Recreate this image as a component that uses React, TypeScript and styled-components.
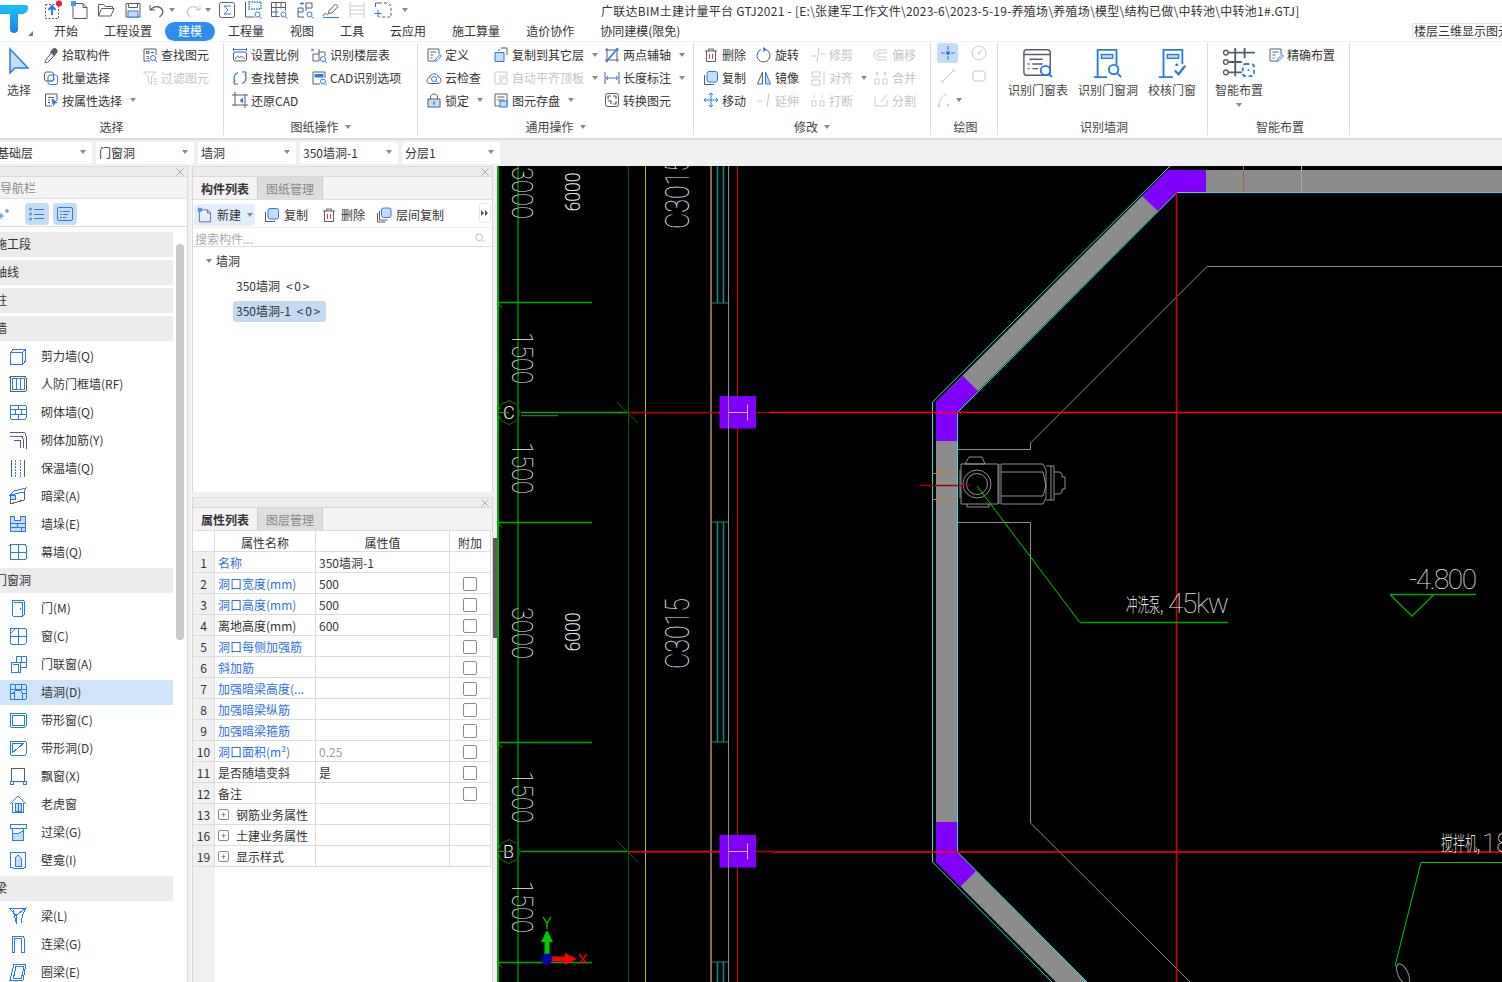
import React from "react";
import styled, { createGlobalStyle } from "styled-components";

const Global = createGlobalStyle`
  html, body { margin: 0; padding: 0; background: #fff; }
  body { font-family: "Noto Sans CJK SC", "Noto Sans", sans-serif; font-size: 12px; color: #333; }
  * { box-sizing: border-box; }
`;

const Page = styled.div`
  width: 1502px; height: 982px; overflow: hidden; display: flex; flex-direction: column; background: #f0f0f0;
`;

/* ---------- icons ---------- */
const Svg = styled.svg<{ $dis?: boolean; $s: number; $crisp?: boolean }>`
  width: ${p => p.$s}px; height: ${p => p.$s}px; flex: none; display: block; fill: none;
  color: ${p => (p.$dis ? "#c9c9c9" : "#565c68")};
  --a: ${p => (p.$dis ? "#c9c9c9" : "#2a7ae6")};
  --f: ${p => (p.$dis ? "#eee" : "#c6dcf6")};
  stroke: currentColor; stroke-width: 1;
  shape-rendering: ${p => (p.$crisp ? "crispEdges" : "auto")};
`;
const A = { stroke: "var(--a)" };
const F = { stroke: "var(--a)", fill: "var(--f)" };

const undoPaths = <><path d="M3 5v5h5" /><path d="M3.500 10c3-4 9-5 12 0 1 2.500-.5 5-3 7" strokeWidth="1.300" /></>;

const icons: Record<string, React.ReactNode> = {
  up: <><rect x="2.500" y="4.500" width="13" height="14" strokeDasharray="2 1.500" /><path d="M9 6v9M5.500 10 9 6l3.500 4" stroke="var(--a)" strokeWidth="2" /><circle cx="16" cy="3.500" r="3" fill="#e8202a" stroke="none" /></>,
  newf: <><path d="M5 3.500h8l4 4v11H3V6" /><path d="M13 3.500v4h4" /><path d="M1 1h5v5H1z" fill="var(--a)" stroke="none" opacity=".8" /></>,
  open: <><path d="M2.500 16V4.500h5l2 2h7v2.500" /><path d="M2.500 16l3-7.500h12.500l-3 7.500z" /></>,
  save: <><path d="M3 3.500h14v13.500H3z" strokeLinejoin="round" /><path d="M5.500 3.500v4h9v-4" /><rect x="5" y="11" width="10" height="6" fill="var(--f)" stroke="var(--a)" /></>,
  undo: undoPaths,
  redo: <g transform="matrix(-1 0 0 1 20 0)">{undoPaths}</g>,
  sigma: <><rect x="2.500" y="2.500" width="15" height="15" rx="2" /><path d="M14 6H7l4 4-4 4h7" stroke="var(--a)" /></>,
  qa1: <><path d="M2.500 2v15h9" /><rect x="6" y="2" width="12" height="7" stroke="var(--a)" strokeDasharray="1.500 1" strokeWidth="1.500" /><circle cx="14.500" cy="14.500" r="2.500" {...A} /><path d="m16.500 16.500 2 2" {...A} /></>,
  qa2: <><path d="M2.500 2.500h14v8M2.500 2.500v14h8M7 2.500v14M12 2.500v6M2.500 7.500h14M2.500 12h7" /><circle cx="14.500" cy="14.500" r="2.500" {...A} /><path d="m16.500 16.500 2 2" {...A} /></>,
  qa3: <><path d="M7 2v3M5 3.500h4" {...A} /><path d="M3 8h5v4H3zM11 3h6v5h-6zM3 12v5h6M11 8v3" /><circle cx="14.500" cy="14.500" r="2.500" {...A} /><path d="m16.500 16.500 2 2" {...A} /></>,
  qa4: <><path d="M11 13 17 6.500 14.500 4 8 10.500 7.500 13.500z" /><path d="M2 16c1-3 3-3 5-1" /><path d="M2 17.500h16" {...A} /></>,
  qa5: <><path d="M3 2v16M17 2v16M3 6h14M3 10h14M3 14h14" stroke="#c9c9c9" /></>,
  qa6: <><path d="M6 3h9l3 3v11H6" strokeDasharray="3 2" /><path d="M5 10v7M1.500 13.500h7" stroke="var(--a)" /><path d="M2.500 7V3H6" /></>,
  pick: <><path d="m9 5 3 3-7.500 7.500-2.500.5.500-2.500z" /><path d="M9.500 2.500c1.500-1.500 3-1.500 4 0s1 2.500-.500 4l-2 2-3.500-3.500z" fill="#565c68" /></>,
  batch: <><rect x="1.500" y="2" width="9" height="9" rx="2" /><rect x="5" y="5" width="9.500" height="9.500" rx="2" {...A} /><path d="m6.500 10 2 2 3.500-3.500" {...A} /></>,
  attr: <><path d="M14 9V2H2.500v12H9" /><path d="M5 5.500h6M5 8h2M5 10.500h2" /><path d="m9 7 5 3.500-2.500.5-1 2.500z" fill="var(--a)" stroke="var(--a)" /></>,
  find: <><path d="M14 8V2H2v12h6" /><path d="M4.500 4.500h2.500v2H4.500zM9 5.500h3M4.500 9.500h2.500M4.500 11.500h2.500" /><circle cx="11" cy="11" r="2.500" {...A} /><path d="m13 13 2 2" {...A} /></>,
  filter: <><path d="M1.500 2h12l-4 5v7l-3-2V7z" /><path d="M11 9h4M11 11.500h4M11 14h4" /></>,
  scale: <><path d="M1.500 1v3M14.500 1v3M2 2.500h12" stroke="var(--a)" /><rect x="1.500" y="5" width="13" height="9" rx="2" /><path d="M3.500 12c1-3 3-4 4-1 1-2 3-2 5 1" /></>,
  frep: <><path d="M6 2.500C2.500 3.500.500 8 3 12M10 13.500c3.500-1 5.500-5.500 3-9.500" stroke="var(--a)" strokeWidth="1.300" /><path d="M10 2h4v3M6 14H2v-3" /></>,
  rcad: <><path d="M3 0v14M0 3h16M13 2v14M0 13h16" /><path d="m11 6-3 2.500 3 2.500" stroke="var(--a)" fill="var(--a)" /></>,
  rfloor: <><path d="M8 2v12H2V7h6M8 5h6v4" /><path d="M1 1.500v3M3 3H1" {...A} /><circle cx="12" cy="12" r="2.500" {...A} /><path d="m14 14 2 2" {...A} /></>,
  cadopt: <><path d="M9 14H2V2h12v6" /><rect x="3.500" y="4" width="9" height="3.500" fill="var(--a)" stroke="none" /><circle cx="12" cy="11.500" r="2.500" {...A} /><path d="m14 13.500 2 2" {...A} /></>,
  def: <><path d="M13 7V2H2v12h6" /><path d="M4.500 5h6M4.500 8h3M4.500 11h2" /><path d="m9 13 5-5.500 1.500 1.500-5 5-2 .5z" {...A} /></>,
  cloud: <><path d="M4 13.500C0 13.500 0 8 3.500 7.500 4.500 3 11 2.500 12 7c4 0 4 6.500 0 6.500z" /><circle cx="8" cy="9" r="2.500" {...A} /><path d="m10 11 1.500 1.500" {...A} /></>,
  lock: <><path d="M4.500 7V5c0-4 7-4 7 0v2" /><rect x="2" y="7" width="12" height="8" fill="var(--f)" stroke="#565c68" /><path d="M8 9.500v3" {...A} strokeWidth="1.500" /></>,
  copyto: <><path d="M8 1h6v7" /><path d="M2 5.500h9v9H2z" {...F} /><path d="M7 2 5 4" /></>,
  autoal: <><path d="M2 2v12h5V6h7V2zM9 8h5v6H9z" /></>,
  saveel: <><path d="M2 2h12v12H2z" /><path d="M4.500 5h7M4.500 8h7" /><rect x="7" y="9" width="7" height="6" {...F} /></>,
  twop: <><path d="M3 1v14M13 1v14M1 3h14M1 13h14" /><path d="M2 15 14 1" stroke="var(--a)" strokeWidth="1.500" /></>,
  len: <><path d="M1 2v12M15 2v12" /><path d="M2 8h12M4 6 2 8l2 2M12 6l2 2-2 2" {...A} /></>,
  conv: <><rect x="1.500" y="1.500" width="13" height="13" rx="2" /><path d="M4 7V4h3M9 12h3V9M9 4h3v3M4 9h3v3" strokeWidth="1.200" /></>,
  del: <><path d="M2 4h12M5.500 4V2h5v2M3.500 4v10.500h9V4" /><path d="M6.500 7v5M9.500 7v5" stroke="#e23b3b" /></>,
  rot: <><path d="M10 2.500A6.500 6.500 0 1 1 5 2.500" /><path d="M7 0.500 10 2.500 7.500 4.500" {...A} fill="var(--a)" /></>,
  trim: <><path d="M1 9h5M10 7h5M9 1l-2 14" /></>,
  off: <><path d="M14 3H6a5 5 0 0 0 0 10h8M14 6H6a2 2 0 0 0 0 4h8" /></>,
  copy: <><path d="M1.500 5v9.500H11" /><rect x="4" y="1.500" width="10.500" height="10.500" rx="2" {...F} /></>,
  mir: <><path d="M6.500 2 1.500 14h5z" /><path d="M9.500 2l5 12h-5z" {...F} /></>,
  alg: <><path d="M2 2h8v5H2zM2 10h8v5H2zM14 1v14" /></>,
  mrg: <><path d="M2 9h4v5H2zM10 9h4v5h-4zM4 3v3M12 3v3" /><path d="m3 2 1 2 1-2M11 2l1 2 1-2" /></>,
  mov: <><path d="M8 1v14M1 8h14M6 3l2-2 2 2M6 13l2 2 2-2M3 6 1 8l2 2M13 6l2 2-2 2" {...A} /></>,
  ext: <><path d="M1 9h5M9 9h1M13 1l-2 14" /></>,
  brk: <><path d="M2 9h4v5H2zM10 9h4v5h-4zM4 6V3M12 6V3" /></>,
  spl: <><path d="M2 5v9h12V8" /><path d="M8 10l6-7" /></>,
  pt: <><path d="M8 1v4M8 11v4M1 8h4M11 8h4" stroke="#2a7ae6" /><circle cx="8" cy="8" r="2" fill="#2a7ae6" stroke="none" /></>,
  circ: <><circle cx="8" cy="8" r="7" /><circle cx="8" cy="8" r="1" /><path d="m8 8 3-3.500" /></>,
  line: <><circle cx="2.500" cy="13.500" r="1.200" /><circle cx="13.500" cy="2.500" r="1.200" /><path d="m3.500 12.500 9-9" /></>,
  rc: <><rect x="2" y="3" width="12" height="10" rx="2" /></>,
  arc: <><path d="M2 14C2 7 6 3 10 2" /><circle cx="2" cy="14" r="1" /><circle cx="11" cy="13" r="1" /></>,
  search: <><circle cx="7" cy="7" r="4.500" stroke="#aaa" /><path d="m10.500 10.500 3 3" stroke="#aaa" /></>,
  layer: <><path d="M1.500 6v9h8" /><path d="M3.500 4v9h8" /><rect x="5.500" y="1" width="9.500" height="9.500" rx="2" {...F} /></>,
};

const nav: Record<string, React.ReactNode> = {
  shear: <><path d="M1.500 5.500h12v12h-12zM1.500 5.500l3-3.500h12v12l-3 3.500M13.500 5.500 16.500 2" {...A} /></>,
  rf: <><rect x="1" y="1.500" width="16" height="15" rx="1" /><path d="M3 3.500h12v11H3zM7 3.500v11M11 3.500v11" {...A} /></>,
  brick: <><rect x="1" y="2" width="16" height="14" rx="1" {...A} /><path d="M1 6.500h16M1 11h16M9 2v4.500M6 6.500V11M12 6.500V11M9 11v5" {...A} /></>,
  reinf: <><path d="M1 1.500h13c2 0 3 1 3 3v13M1 5h10c2 0 3 1 3 3v9M5 9h5c1 0 1.500.5 1.500 1.500V17" /><path d="M1 5h10" {...A} /></>,
  ins: <><path d="M2 1v17M15 1v17" /><path d="M6 1v17M11 1v17" {...A} strokeDasharray="1.500 1.500" /></>,
  dark: <><path d="M1 8v9l14-4V5z" /><path d="M1 8 5 4l12-3-2 4zM1 8l14-3" {...A} /><path d="M1 8h5v4H1z" {...F} /></>,
  dou: <><path d="M1.500 1.500h4v4h6v-4h5v15h-15z" {...F} /><path d="M1.500 8h15M1.500 12h15M8 8v4M12 12v4.500" {...A} /></>,
  cur: <><rect x="1" y="1.500" width="16" height="15" rx="1" {...A} /><path d="M9 1.500v15M9 9h8M1 9h8" {...A} /></>,
  door: <><rect x="3" y="1" width="12" height="16" rx="1" {...A} /><path d="M5 3h8v14" {...A} /><circle cx="11.500" cy="10" r=".7" fill="var(--a)" stroke="none" /></>,
  win: <><rect x="1" y="1" width="16" height="16" rx="1" {...A} /><path d="M9 1v16M1 9h16M1 7l6-6" {...A} /></>,
  dw: <><path d="M2 7.500h9V17H2zM4 9.500h5V17" {...A} /><path d="M7 7.500V1.500h10V12H11M12 1.500V7h5" {...A} /></>,
  hole: <><rect x="1" y="1" width="16" height="15.500" rx="1" {...A} /><path d="M1 6.500h16M6 1v5.500M12 1v5.500M1 10.500h4M13 10.500h4" {...A} /><path d="M5 16.500v-7c0-3 8-3 8 0v7" {...A} /></>,
  strip: <><rect x="1" y="2" width="16" height="14" rx="1" {...A} /><rect x="3" y="4" width="12" height="10" {...A} /></>,
  striph: <><rect x="1" y="2" width="16" height="14" rx="1" {...A} /><path d="M3 14V4h12z" {...A} /></>,
  bay: <><path d="M2.500 15V2.500c0-1 1-1.500 1.500-1.500h10c1 0 1.500.5 1.500 1.500V15M.500 14.500h17" /><path d="M1 14.500h3v3H1zM14 14.500h3v3h-3z" {...A} /></>,
  dormer: <><path d="M1 9 9 1l8 8M3.500 8v9.500h11V8" {...A} /><path d="M6 8.500h6V16H6zM9 8.500V16" {...F} /></>,
  lintel: <><path d="M1 1.500h16v4H1z" {...A} /><path d="M3.500 5.500V17h11V5.500" {...A} /><path d="M3.500 11c4 0 8-1 11-3.500V17h-11z" {...F} /></>,
  niche: <><rect x="1.500" y="1" width="15" height="16" rx="2" {...A} /><path d="M6 15V7l3-3 3 3v8z" {...F} /></>,
  beam: <><path d="M1 1.500 17 1 7 8.500zM4 3.500 7.500 17V8M17 1 13.500 8.500 12 16" {...A} /></>,
  conn: <><path d="M3 17.500V3c0-1 .5-2 2-2h8c1 0 2 1 2 2v14.500h-2.500V4c0-.5-.5-1-1-1H6.500c-.5 0-1 .5-1 1v13.500z" {...A} /></>,
  ring: <><path d="M5 1h12l-3 16H1z" {...A} /><path d="M7 3h8l-2.500 12H4.500z" {...A} /></>,
};

const Icon = ({ n, s = 16, dis, vb }: { n: string; s?: number; dis?: boolean; vb?: number }) => (
  <Svg $s={s} $dis={dis} viewBox={`0 0 ${vb ?? 16} ${vb ?? 16}`}>{icons[n]}</Svg>
);

const Caret = styled.i<{ $ml?: number; $mt?: number }>`
  display: inline-block; flex: none; width: 0; height: 0; margin-left: ${p => p.$ml ?? 5}px; margin-top: ${p => p.$mt ?? 0}px;
  border-left: 3px solid transparent; border-right: 3px solid transparent; border-top: 4px solid #888;
`;

/* ---------- top bar ---------- */
const Top = styled.header`
  position: relative; height: 41px; background: #fff; flex: none;
`;
const Logo = styled.svg`
  position: absolute; left: 0; top: 1px; width: 34px; height: 36px;
`;
const QuickBar = styled.div`
  display: flex; align-items: center; height: 20px; padding-left: 40px;
`;
const Quick = styled.span<{ $w: number; $pl?: number }>`
  width: ${p => p.$w}px; padding-left: ${p => p.$pl ?? 0}px; display: flex; align-items: center; justify-content: center; flex: none;
`;
const Title = styled.div`
  position: absolute; left: 601px; top: 2px; line-height: 17px; white-space: nowrap; color: #333; font-size: 12px; letter-spacing: .26px;
`;
const TabRow = styled.nav`
  display: flex; align-items: center; height: 20px; padding-left: 41px; margin-top: 1px;
`;
const Tab = styled.span<{ $on?: boolean }>`
  padding: 0 13px; height: 19px; line-height: 18px; border-radius: 10px; white-space: nowrap;
  background: ${p => (p.$on ? "#2b8ef0" : "transparent")}; color: ${p => (p.$on ? "#fff" : "#333")};
`;
const Peek = styled.div`
  position: absolute; left: 1412px; top: 23px; width: 110px; height: 16px; border: 1px solid #e0e0e0; border-radius: 2px;
  line-height: 14px; white-space: nowrap; padding-left: 1px; color: #333;
`;

/* ---------- ribbon ---------- */
const Ribbon = styled.section`
  display: flex; height: 99px; background: #fff; border-top: 1px solid #f0f0f0; border-bottom: 2px solid #dcdcdc; padding-top: 1px; flex: none;
`;
const Group = styled.div<{ $w: number }>`
  width: ${p => p.$w}px; height: 92px; flex: none; display: flex; flex-direction: column; border-right: 1px solid #ddd;
`;
const GroupBody = styled.div<{ $pl?: number }>`
  display: flex; height: 74px; padding-left: ${p => p.$pl ?? 0}px;
`;
const GroupLabel = styled.div<{ $pl?: number }>`
  flex: 1; display: flex; align-items: center; justify-content: center; color: #444; padding-top: 2px; padding-left: ${p => p.$pl ?? 0}px;
`;
const Col = styled.div<{ $w?: number }>`
  display: grid; grid-template-rows: 23px 23px 22px; flex: none; width: ${p => (p.$w ? `${p.$w}px` : "auto")};
`;
const Item = styled.div<{ $dis?: boolean }>`
  display: flex; align-items: center; gap: 3px; white-space: nowrap; color: ${p => (p.$dis ? "#c4c4c4" : "#333")};
`;
const Big = styled.div<{ $w: number; $ml?: number }>`
  width: ${p => p.$w}px; margin-left: ${p => p.$ml ?? 0}px; flex: none; display: flex; flex-direction: column; align-items: center;
  padding-top: 4px; white-space: nowrap; color: #444;
`;
const BigLabel = styled.span`
  margin-top: 2px; line-height: 17px;
`;
const SelectArrow = styled.svg`
  width: 24px; height: 28px; margin-bottom: 4px; flex: none; fill: #c6dcf6; stroke: #2a7ae6; stroke-width: 1.500;
`;
const DrawBtn = styled.span<{ $on?: boolean }>`
  width: 21px; height: 20px; display: flex; align-items: center; justify-content: center; border-radius: 3px;
  background: ${p => (p.$on ? "#c6dcf4" : "transparent")};
`;

type RI = { i?: string; t?: string; c?: boolean; d?: boolean };
const RCol = ({ w, items }: { w?: number; items: RI[] }) => (
  <Col $w={w}>
    {items.map((x, k) => (
      <Item key={k} $dis={x.d}>
        {x.i && <Icon n={x.i} dis={x.d} />}
        {x.t}
        {x.c && <Caret />}
      </Item>
    ))}
  </Col>
);

const BigIcon = styled.svg`
  width: 32px; height: 32px; fill: none; stroke: #565c68; stroke-width: 1.500; display: block; flex: none;
`;

/* ---------- selects ---------- */
const SelectBar = styled.div`
  height: 26px; flex: none; display: flex; gap: 4px; align-items: flex-start; margin-left: -6px; background: #f0f0f0; padding-top: 2px;
`;
const Sel = styled.div`
  width: 98px; height: 22px; background: #fff; border-radius: 3px; display: flex; align-items: center; justify-content: space-between;
  padding: 0 6px 2px 3px; color: #333; white-space: nowrap;
`;

/* ---------- main ---------- */
const Main = styled.div`
  flex: 1; min-height: 0; display: flex; background: #f0f0f0;
`;
const NavPanel = styled.aside`
  width: 188px; flex: none; display: flex; flex-direction: column; background: #fff; border-right: 1px solid #d8d8d8; overflow: hidden;
`;
const Strip = styled.div`
  height: 11px; background: #ececec; border-top: 1px solid #ddd; border-bottom: 1px solid #d8d8d8; flex: none; display: flex; justify-content: flex-end; align-items: center; padding-right: 3px;
  overflow: visible;
`;
const CloseX = styled.svg`
  width: 8px; height: 8px; stroke: #aaa; fill: none; flex: none;
`;
const NavTitle = styled.div`
  height: 22px; background: #f3f3f3; border-bottom: 1px solid #ddd; color: #888; line-height: 21px; flex: none;
`;
const NavTools = styled.div`
  height: 28px; display: flex; align-items: center; gap: 4px; padding-top: 2px; border-bottom: 1px solid #ddd; flex: none;
`;
const PlusGlyph = styled.svg`
  width: 21px; height: 16px; fill: none; stroke: #2a7ae6; flex: none;
`;
const ToolBtn = styled.span`
  width: 24px; height: 22px; border-radius: 4px; background: #c5dcf3; display: flex; align-items: center; justify-content: center;
`;
const NavBody = styled.div`
  display: flex; flex: 1; min-height: 0; padding-top: 3px;
`;
const NavList = styled.div`
  width: 173px; flex: none; display: flex; flex-direction: column;
`;
const NavHead = styled.div`
  height: 25px; margin: 2px 0 1px; flex: none; background: #ececec; line-height: 24px; text-indent: -5px; white-space: nowrap; color: #333;
`;
const NavItem = styled.div<{ $on?: boolean }>`
  height: 25px; margin: 2px 0 1px; padding: 0 0 2px 9px; flex: none; display: flex; align-items: center; gap: 14px; white-space: nowrap; color: #333;
  background: ${p => (p.$on ? "#cfe4fb" : "transparent")};
`;
const ScrollThumb = styled.div`
  width: 8px; height: 396px; margin: 14px 0 0 3px; background: #c9c9c9; border-radius: 4px; flex: none;
`;
const MidCol = styled.div`
  width: 301px; margin-left: 4px; flex: none; display: flex; flex-direction: column;
`;
const Panel = styled.section<{ $h?: number }>`
  background: #fff; display: flex; flex-direction: column; border-left: 1px solid #d8d8d8; border-right: 1px solid #d8d8d8;
  height: ${p => (p.$h ? `${p.$h}px` : "auto")}; flex: ${p => (p.$h ? "none" : "1")}; min-height: 0;
`;
const PanelGap = styled.div`
  height: 5px; flex: none; background: #f0f0f0;
`;
const Tabs = styled.div`
  display: flex; height: 23px; background: #f3f3f3; border-bottom: 1px solid #ddd; flex: none;
`;
const PTab = styled.span<{ $on?: boolean }>`
  width: 65px; text-align: center; line-height: 23px; font-weight: ${p => (p.$on ? 700 : 400)};
  color: ${p => (p.$on ? "#333" : "#888")}; background: ${p => (p.$on ? "#f3f3f3" : "#ddd")};
  border-right: 1px solid #ccc;
`;
const CompTools = styled.div`
  height: 28px; display: flex; align-items: center; padding: 2px 0 0 1px; border-bottom: 1px solid #eee; flex: none; position: relative;
`;
const NewBtn = styled.span`
  width: 61px; height: 22px; background: #e2eefb; border-radius: 3px; display: flex; align-items: center; gap: 4px; padding-left: 3px; margin-right: 9px;
`;
const CompBtn = styled.span<{ $w: number }>`
  width: ${p => p.$w}px; display: flex; align-items: center; gap: 4px; white-space: nowrap;
`;
const More = styled.span`
  position: absolute; right: 1px; top: 3px; width: 12px; height: 20px; border: 1px solid #e6e6e6; border-radius: 3px; display: flex; align-items: center; justify-content: center;
`;
const Search = styled.div`
  height: 19px; display: flex; align-items: center; justify-content: space-between; padding: 2px 6px 0 2px; color: #aaa; border-bottom: 1px solid #ddd; flex: none;
`;
const TreeHead = styled.div`
  display: flex; align-items: center; padding-left: 13px; gap: 4px; height: 23px; margin-top: 2px;
`;
const TreeRow = styled.div<{ $on?: boolean }>`
  margin-left: 40px; width: 93px; height: 21px; line-height: 20px; padding-left: 3px; border-radius: 3px; margin-top: 4px; white-space: nowrap;
  background: ${p => (p.$on ? "#c4daf2" : "transparent")};
`;
const TreeTag = styled.span`
  margin-left: 6px; letter-spacing: 1.700px;
`;
const PropGrid = styled.div`
  display: grid; grid-template-columns: 22px 101px 134px 41px; grid-auto-rows: 21px; width: 298px;
`;
const Cell = styled.div<{ $gray?: boolean; $blue?: boolean; $center?: boolean; $muted?: boolean }>`
  border-right: 1px solid #dcdcdc; border-bottom: 1px solid #dcdcdc; white-space: nowrap; overflow: hidden; display: flex; align-items: center;
  padding-left: ${p => (p.$center ? 0 : 3)}px; justify-content: ${p => (p.$center ? "center" : "flex-start")};
  background: ${p => (p.$gray ? "#f0f0f0" : "#fff")};
  color: ${p => (p.$blue ? "#2f6fe0" : p.$muted ? "#999" : "#333")};
`;
const HeadCell = styled(Cell)`
  padding-top: 2px;
`;
const Check = styled.span`
  width: 14px; height: 14px; margin-top: 1px; border: 1px solid #8a8a8a; border-radius: 2px; background: #fff;
`;
const Expand = styled.span`
  width: 11px; height: 11px; border: 1px solid #888; border-radius: 2px; margin-right: 7px; flex: none; font-size: 9px; line-height: 9px; text-align: center; color: #555;
`;
const PropFoot = styled.div`
  flex: 1; width: 22px; background: #f0f0f0;
`;
const Splitter = styled.div`
  width: 4px; flex: none; display: flex; align-items: flex-start; background: #f0f0f0; padding-top: 372px;
`;
const Grip = styled.div`
  width: 4px; height: 100px; background: #5a5a5a;
`;
const Canvas = styled.div`
  flex: 1; min-width: 0; background: #000;
`;
const CadSvg = styled.svg`
  display: block; width: 100%; height: 100%; background: #000;
  text { font-family: Roboto, "Liberation Sans", sans-serif; font-weight: 100; fill: #e8e8e8; }
  .cjk { font-family: "Noto Sans CJK SC", sans-serif; font-weight: 300; }
  .mid { font-weight: 300; }
`;

const navData: (string | [string, string, boolean?])[] = [
  "施工段", "轴线", "柱", "墙",
  ["shear", "剪力墙(Q)"], ["rf", "人防门框墙(RF)"], ["brick", "砌体墙(Q)"], ["reinf", "砌体加筋(Y)"], ["ins", "保温墙(Q)"], ["dark", "暗梁(A)"], ["dou", "墙垛(E)"], ["cur", "幕墙(Q)"],
  "门窗洞",
  ["door", "门(M)"], ["win", "窗(C)"], ["dw", "门联窗(A)"], ["hole", "墙洞(D)", true], ["strip", "带形窗(C)"], ["striph", "带形洞(D)"], ["bay", "飘窗(X)"], ["dormer", "老虎窗"], ["lintel", "过梁(G)"], ["niche", "壁龛(I)"],
  "梁",
  ["beam", "梁(L)"], ["conn", "连梁(G)"], ["ring", "圈梁(E)"],
];

const props: { n: string; name: string; v?: string; blue?: boolean; muted?: boolean; chk?: boolean; exp?: boolean }[] = [
  { n: "1", name: "名称", v: "350墙洞-1", blue: true },
  { n: "2", name: "洞口宽度(mm)", v: "500", blue: true, chk: true },
  { n: "3", name: "洞口高度(mm)", v: "500", blue: true, chk: true },
  { n: "4", name: "离地高度(mm)", v: "600", chk: true },
  { n: "5", name: "洞口每侧加强筋", blue: true, chk: true },
  { n: "6", name: "斜加筋", blue: true, chk: true },
  { n: "7", name: "加强暗梁高度(...", blue: true, chk: true },
  { n: "8", name: "加强暗梁纵筋", blue: true, chk: true },
  { n: "9", name: "加强暗梁箍筋", blue: true, chk: true },
  { n: "10", name: "洞口面积(m²)", v: "0.25", blue: true, muted: true, chk: true },
  { n: "11", name: "是否随墙变斜", v: "是", chk: true },
  { n: "12", name: "备注", chk: true },
  { n: "13", name: "钢筋业务属性", exp: true },
  { n: "16", name: "土建业务属性", exp: true },
  { n: "19", name: "显示样式", exp: true },
];

const Close = () => <CloseX viewBox="0 0 8 8"><path d="M.5.5l7 7M7.500.5l-7 7" /></CloseX>;

const Cad = () => (
  <CadSvg viewBox="497 166 1005 816">
    {/* vertical references */}
    <path d="M498 166V982" stroke="#0a0" strokeWidth="2" />
    <path d="M518 166V982" stroke="#006400" strokeWidth="2" />
    <path d="M628.500 166V982" stroke="#006400" />
    <path d="M645.500 166V982" stroke="#c8b400" />
    <path d="M711 166V982" stroke="#8a6a50" strokeWidth="2" />
    <path d="M717.500 166V303M723.500 166V303M717.500 522V742M723.500 522V742M717.500 962V982M723.500 962V982" stroke="#009090" strokeWidth="1.500" />
    <path d="M712 303H728M712 522H728M712 742H728M712 962H728" stroke="#009090" />
    <path d="M737.500 166V982" stroke="#e00000" />
    {/* green dimension lines */}
    {[302.5, 522.5, 742.5, 962.5].map(y => (
      <g key={y}><path d={`M497 ${y}H592`} stroke="#0a0" strokeWidth="1.500" /><path d={`M497 ${y}l5 5`} stroke="#0c0" /></g>
    ))}
    {/* wall */}
    <polygon points="936,402 1168,170 1502,170 1502,192 1177,192 957,412 957,852 1100,995 1069,995 936,862" fill="#8c8c8c" />
    <polygon points="936,441 936,402 963,376 978,391 957,412 957,441" fill="#8000ff" />
    <polygon points="936,822 957,822 957,852 976,871 960.500,886.500 936,862" fill="#8000ff" />
    <polygon points="1168,170 1206,170 1206,192 1177,192 1158,211 1142,196" fill="#8000ff" />
    <path d="M1170 166 932.500 402V862L1052 982" stroke="#2fe0ea" fill="none" />
    <path d="M1502 192.500H1177L957.500 412.500V852L1087 982" stroke="#2fe0ea" fill="none" />
    <path d="M1243.500 166V192" stroke="#a06a40" />
    <path d="M1301.500 166V192" stroke="#aaa" />
    {/* interior lines */}
    <path d="M958 449.500H1030.500V443L1207 266.500H1502" stroke="#8c8c8c" fill="none" />
    <path d="M958 522.500H1030.500V823L1190 982" stroke="#8c8c8c" fill="none" />
    {/* axes */}
    <path d="M1176.500 192V982" stroke="#d80000" strokeWidth="1.500" />
    <path d="M521 412.500H628" stroke="#0a0" strokeWidth="1.500" />
    <path d="M628 412.500H720" stroke="#c00000" strokeWidth="1.500" />
    <path d="M756 412.500H770" stroke="#c00000" />
    <path d="M770 412.500H1502" stroke="#f00" strokeWidth="1.500" />
    <path d="M521 851.500H628" stroke="#0a0" strokeWidth="1.500" />
    <path d="M628 851.750H720" stroke="#f00" strokeWidth="1.500" />
    <path d="M756 851.750H772" stroke="#f00" />
    <path d="M772 852H1502" stroke="#f00" strokeWidth="1.500" />
    <path d="M617 402 638 423M617 841 638 862" stroke="#006400" />
    <path d="M521 415.500H558" stroke="#555" strokeWidth="1.500" />
    {/* axis bubbles */}
    {[[509, 412.5, "C"], [509, 851.5, "B"]].map(([x, y, t]) => (
      <g key={t as string}>
        <polygon points={`${+x + 11},${+y} ${+x + 8},${+y - 8} ${x},${+y - 12} ${+x - 8},${+y - 8} ${+x - 11},${y} ${+x - 8},${+y + 8} ${x},${+y + 12} ${+x + 8},${+y + 8}`} fill="none" stroke="#008000" />
        <text className="mid" x={+x - 6} y={+y + 6.5} fontSize="18">{t}</text>
        <path d={`M497 ${y}h12`} stroke="#0a0" />
      </g>
    ))}
    {/* column markers */}
    {[[396, 412.5], [835, 851.5]].map(([t, c]) => (
      <g key={t}>
        <rect x="719.500" y={t} width="36.500" height="32.500" fill="#8000ff" />
        <path d={`M729 ${c}H747`} stroke="#c8c0d0" />
        <path d={`M747.500 ${c - 8}V${c + 8}`} stroke="#c8c0d0" />
      </g>
    ))}
    <path d="M728.500 166V982" stroke="#8c8c8c" />
    {/* rotated labels */}
    {[["3000", 193], ["1500", 358], ["1500", 468], ["3000", 633], ["1500", 797], ["1500", 907]].map(([t, y], k) => (
      <text key={k} fontSize="30" textAnchor="middle" textLength="52" lengthAdjust="spacingAndGlyphs" transform={`translate(512 ${y}) rotate(90)`}>{t}</text>
    ))}
    <text className="mid" fontSize="20" textAnchor="middle" textLength="39" lengthAdjust="spacingAndGlyphs" transform="translate(580 192) rotate(-90)">6000</text>
    <text className="mid" fontSize="20" textAnchor="middle" textLength="39" lengthAdjust="spacingAndGlyphs" transform="translate(580 632) rotate(-90)">6000</text>
    <text fontSize="33" textLength="71" lengthAdjust="spacingAndGlyphs" transform="translate(689 229) rotate(-90)">C3015</text>
    <text fontSize="33" textLength="71" lengthAdjust="spacingAndGlyphs" transform="translate(689 669) rotate(-90)">C3015</text>
    {/* pump */}
    <g fill="none" stroke="#a0a0a0" strokeWidth=".9">
      <path d="M961 464h37v40h-37zM960 470v28" />
      <path d="M969 457h13l3 7h-20z" />
      <circle cx="977" cy="484" r="14" />
      <circle cx="977" cy="484" r="10.500" />
      <path d="M999 464v40M1001 464v40M1001 464h42l3 6v28l-3 6h-42M1001 472h42M1001 496h42" />
      <path d="M1043 472l3 14-3 10M1051 466v34M1054 466v34M1046 466h8M1046 500h8" />
      <path d="M1054 472h6l2 2v3h3v12h-3v3l-2 2h-6" />
      <path d="M967 504v3h22v-3" />
    </g>
    <path d="M919 485.500H970" stroke="#a00000" strokeWidth="1.500" />
    <path d="M932 473.500H957M932 499.500H957" stroke="#c87820" />
    <path d="M977 486 1080 622.500" stroke="#0c0" />
    <path d="M1080 622.500H1228" stroke="#0a0" strokeWidth="1.500" />
    <text className="cjk" x="1126" y="612" fontSize="19" textLength="37" lengthAdjust="spacingAndGlyphs">冲洗泵,</text>
    <text x="1168" y="613" fontSize="28" textLength="61">45kw</text>
    <text x="1409" y="589" fontSize="28" textLength="68">-4.800</text>
    <path d="M1390 594.500H1476M1390 594.500 1412 616 1434 594.500" stroke="#0a0" fill="none" strokeWidth="1.300" />
    <text className="cjk" x="1441" y="851" fontSize="20" textLength="39" lengthAdjust="spacingAndGlyphs">搅拌机,</text>
    <text x="1482" y="852" fontSize="26">18</text>
    <path d="M1395 966 1421 862.500H1502" stroke="#0c0" fill="none" />
    <ellipse cx="1403" cy="974" rx="5" ry="11" transform="rotate(-25 1403 974)" stroke="#999" fill="none" />
    {/* ucs */}
    <rect x="544.500" y="940" width="5" height="16" fill="#0c0" />
    <polygon points="547,930 553,942 541,942" fill="#0c0" />
    <rect x="550" y="956.500" width="18" height="5" fill="#f00" />
    <polygon points="577,959 565,953 565,965" fill="#f00" />
    <circle cx="546.800" cy="959" r="5.500" fill="#0000b0" />
    <path d="M543 917l4 6 4-6M547 923v6" stroke="#0c0" fill="none" strokeWidth="1.300" />
    <path d="M579 954l8 10M587 954l-8 10" stroke="#e00" fill="none" strokeWidth="1.300" />
  </CadSvg>
);

export default function App() {
  return (
    <Page>
      <Global />
      <Top>
        <Logo viewBox="0 0 34 36">
          <defs>
            <linearGradient id="lg" x1="0" y1="0" x2="0" y2="1">
              <stop offset="0" stopColor="#19c4f4" />
              <stop offset="1" stopColor="#1a7ff0" />
            </linearGradient>
          </defs>
          <path d="M0 4h25q4 0 3 4t-5 5h-5v15q0 4-4 4t-4-4V13H0z" fill="url(#lg)" />
          <path d="M33 30v5h-5z" fill="#777" />
        </Logo>
        <QuickBar>
          {["up", "newf", "open", "save"].map(n => <Quick key={n} $w={26.5}><Icon n={n} s={20} vb={20} /></Quick>)}
          <Quick $w={30}><Icon n="undo" s={20} vb={20} /><Caret $ml={2} /></Quick>
          <Quick $w={38} $pl={4}><Icon n="redo" s={20} vb={20} dis /><Caret $ml={2} /></Quick>
          {["sigma", "qa1", "qa2", "qa3", "qa4", "qa5", "qa6"].map(n => <Quick key={n} $w={26}><Icon n={n} s={20} vb={20} /></Quick>)}
          <Quick $w={18}><Caret $ml={0} /></Quick>
        </QuickBar>
        <Title>广联达BIM土建计量平台 GTJ2021 - [E:\张建军工作文件\2023-6\2023-5-19-养殖场\养殖场\模型\结构已做\中转池\中转池1#.GTJ]</Title>
        <TabRow>
          {["开始", "工程设置", "建模", "工程量", "视图", "工具", "云应用", "施工算量", "造价协作", "协同建模(限免)"].map(t => <Tab key={t} $on={t === "建模"}>{t}</Tab>)}
        </TabRow>
        <Peek>楼层三维显示图元</Peek>
      </Top>

      <Ribbon>
        <Group $w={224}>
          <GroupBody>
            <Big $w={38}>
              <SelectArrow viewBox="0 0 24 28"><path d="M3 2 21 21 8 21 3 26z" /></SelectArrow>
              <BigLabel>选择</BigLabel>
            </Big>
            <Col $w={5} />
            <RCol w={99} items={[{ i: "pick", t: "拾取构件" }, { i: "batch", t: "批量选择" }, { i: "attr", t: "按属性选择", c: true }]} />
            <RCol items={[{ i: "find", t: "查找图元" }, { i: "filter", t: "过滤图元", d: true }]} />
          </GroupBody>
          <GroupLabel>选择</GroupLabel>
        </Group>
        <Group $w={194}>
          <GroupBody $pl={8}>
            <RCol w={79} items={[{ i: "scale", t: "设置比例" }, { i: "frep", t: "查找替换" }, { i: "rcad", t: "还原CAD" }]} />
            <RCol items={[{ i: "rfloor", t: "识别楼层表" }, { i: "cadopt", t: "CAD识别选项" }]} />
          </GroupBody>
          <GroupLabel>图纸操作<Caret $ml={6} /></GroupLabel>
        </Group>
        <Group $w={276}>
          <GroupBody $pl={8}>
            <RCol w={67} items={[{ i: "def", t: "定义" }, { i: "cloud", t: "云检查" }, { i: "lock", t: "锁定", c: true }]} />
            <RCol w={111} items={[{ i: "copyto", t: "复制到其它层", c: true }, { i: "autoal", t: "自动平齐顶板", c: true, d: true }, { i: "saveel", t: "图元存盘", c: true }]} />
            <RCol items={[{ i: "twop", t: "两点辅轴", c: true }, { i: "len", t: "长度标注", c: true }, { i: "conv", t: "转换图元" }]} />
          </GroupBody>
          <GroupLabel>通用操作<Caret $ml={6} /></GroupLabel>
        </Group>
        <Group $w={237}>
          <GroupBody $pl={9}>
            <RCol w={53} items={[{ i: "del", t: "删除" }, { i: "copy", t: "复制" }, { i: "mov", t: "移动" }]} />
            <RCol w={54} items={[{ i: "rot", t: "旋转" }, { i: "mir", t: "镜像" }, { i: "ext", t: "延伸", d: true }]} />
            <RCol w={63} items={[{ i: "trim", t: "修剪", d: true }, { i: "alg", t: "对齐", c: true, d: true }, { i: "brk", t: "打断", d: true }]} />
            <RCol items={[{ i: "off", t: "偏移", d: true }, { i: "mrg", t: "合并", d: true }, { i: "spl", t: "分割", d: true }]} />
          </GroupBody>
          <GroupLabel>修改<Caret $ml={6} /></GroupLabel>
        </Group>
        <Group $w={67}>
          <GroupBody $pl={6}>
            <Col $w={31}>
              <DrawBtn $on><Icon n="pt" /></DrawBtn>
              <DrawBtn><Icon n="line" dis /></DrawBtn>
              <Item><Icon n="arc" dis /><Caret $ml={0} /></Item>
            </Col>
            <Col>
              <DrawBtn><Icon n="circ" dis /></DrawBtn>
              <DrawBtn><Icon n="rc" dis /></DrawBtn>
            </Col>
          </GroupBody>
          <GroupLabel $pl={3}>绘图</GroupLabel>
        </Group>
        <Group $w={210}>
          <GroupBody $pl={10}>
            <Big $w={60}>
              <BigIcon viewBox="0 0 34 34"><rect x="2" y="3" width="28" height="27" rx="3" /><path d="M2 8h28M8 13h14M6 18h2M11 18h11M6 23h2M11 23h6" /><circle cx="25" cy="25" r="5" stroke="#2a7ae6" strokeWidth="2" /><path d="m29 29 3 3" stroke="#2a7ae6" strokeWidth="2" /></BigIcon>
              <BigLabel>识别门窗表</BigLabel>
            </Big>
            <Big $w={60} $ml={10}>
              <BigIcon viewBox="0 0 34 34"><path d="M6 32V3h20v16M2 32h14" stroke="#2a7ae6" strokeWidth="2" /><rect x="10" y="8" width="12" height="4" fill="#c6dcf6" stroke="#2a7ae6" /><circle cx="23" cy="24" r="5" stroke="#2a7ae6" strokeWidth="2" /><path d="m27 28 4 4" stroke="#2a7ae6" strokeWidth="2" /></BigIcon>
              <BigLabel>识别门窗洞</BigLabel>
            </Big>
            <Big $w={48} $ml={10}>
              <BigIcon viewBox="0 0 34 34"><path d="M8 32V3h20v15M3 32h15" stroke="#2a7ae6" strokeWidth="2" /><rect x="12" y="8" width="12" height="4" fill="#c6dcf6" stroke="#2a7ae6" /><path d="m20 25 4 4 7-9" stroke="#2a7ae6" strokeWidth="2.500" /><circle cx="22" cy="19" r="1.500" fill="#2a7ae6" stroke="none" /></BigIcon>
              <BigLabel>校核门窗</BigLabel>
            </Big>
          </GroupBody>
          <GroupLabel $pl={3}>识别墙洞</GroupLabel>
        </Group>
        <Group $w={142}>
          <GroupBody $pl={7}>
            <Big $w={48}>
              <BigIcon viewBox="0 0 34 34"><path d="M6 6h28M6 16h14M6 27h14M13 1v30M23 1v11" strokeWidth="2" /><circle cx="3" cy="6" r="2.500" fill="#fff" /><circle cx="3" cy="16" r="2.500" fill="#fff" /><circle cx="3" cy="27" r="2.500" fill="#fff" /><rect x="21" y="18" width="12" height="13" rx="3" stroke="#2a7ae6" strokeWidth="2" strokeDasharray="4 3" /><circle cx="27" cy="24.500" r="1" fill="#2a7ae6" stroke="none" /></BigIcon>
              <BigLabel>智能布置</BigLabel>
              <Caret $ml={0} $mt={5} />
            </Big>
            <Col $w={5} />
            <RCol items={[{ i: "def", t: "精确布置" }]} />
          </GroupBody>
          <GroupLabel $pl={3}>智能布置</GroupLabel>
        </Group>
      </Ribbon>

      <SelectBar>
        {["基础层", "门窗洞", "墙洞", "350墙洞-1", "分层1"].map(t => <Sel key={t}>{t}<Caret $ml={0} /></Sel>)}
      </SelectBar>

      <Main>
        <NavPanel>
          <Strip><Close /></Strip>
          <NavTitle>导航栏</NavTitle>
          <NavTools>
            <PlusGlyph viewBox="0 0 21 16"><path d="M-2 10H4M1 7v6M5 5h4M7 3v4" /></PlusGlyph>
            <ToolBtn><svg width="16" height="14" viewBox="0 0 16 14" fill="none" stroke="#2a7ae6"><path d="M5 2.500h10M5 7.500h10M5 11.500h10" /><circle cx="1.500" cy="2" r="1" /><circle cx="1.500" cy="7" r="1" /><circle cx="1.500" cy="12" r="1" /></svg></ToolBtn>
            <ToolBtn><svg width="16" height="14" viewBox="0 0 16 14" fill="none" stroke="#2a7ae6"><rect x=".5" y=".5" width="15" height="13" rx="1.500" /><path d="M3 4.500h2M6 4.500h7M3 7.500h2M6 7.500h5M3 10.500h2M6 10.500h3" /></svg></ToolBtn>
          </NavTools>
          <NavBody>
            <NavList>
              {navData.map((d, k) => typeof d === "string"
                ? <NavHead key={k}>{d}</NavHead>
                : <NavItem key={k} $on={d[2]}>
                    <Svg $s={18} $crisp viewBox="0 0 18 18">{nav[d[0]]}</Svg>
                    {d[1]}
                  </NavItem>)}
            </NavList>
            <ScrollThumb />
          </NavBody>
        </NavPanel>

        <MidCol>
          <Panel $h={326}>
            <Strip><Close /></Strip>
            <Tabs><PTab $on>构件列表</PTab><PTab>图纸管理</PTab></Tabs>
            <CompTools>
              <NewBtn><Icon n="newf" vb={20} />新建<Caret $ml={2} /></NewBtn>
              <CompBtn $w={57}><Icon n="copy" />复制</CompBtn>
              <CompBtn $w={55}><Icon n="del" />删除</CompBtn>
              <CompBtn $w={80}><Icon n="layer" />层间复制</CompBtn>
              <More><svg width="8" height="6" viewBox="0 0 8 6" fill="#555"><path d="M0 0l3 3-3 3zM4 0l3 3-3 3z" /></svg></More>
            </CompTools>
            <Search>搜索构件...<Icon n="search" s={12} /></Search>
            <TreeHead><Caret $ml={0} />墙洞</TreeHead>
            <TreeRow>350墙洞<TreeTag>&lt;0&gt;</TreeTag></TreeRow>
            <TreeRow $on>350墙洞-1<TreeTag>&lt;0&gt;</TreeTag></TreeRow>
          </Panel>
          <PanelGap />
          <Panel>
            <Strip><Close /></Strip>
            <Tabs><PTab $on>属性列表</PTab><PTab>图层管理</PTab></Tabs>
            <PropGrid>
              <HeadCell $center />
              <HeadCell $center>属性名称</HeadCell>
              <HeadCell $center>属性值</HeadCell>
              <HeadCell $center>附加</HeadCell>
              {props.map(p => (
                <React.Fragment key={p.n}>
                  <Cell $gray $center>{p.n}</Cell>
                  <Cell $blue={p.blue}>
                    {p.exp && <Expand>+</Expand>}
                    {p.name}
                  </Cell>
                  <Cell $muted={p.muted}>{p.v}</Cell>
                  <Cell $center>{p.chk && <Check />}</Cell>
                </React.Fragment>
              ))}
            </PropGrid>
            <PropFoot />
          </Panel>
        </MidCol>
        <Splitter><Grip /></Splitter>
        <Canvas><Cad /></Canvas>
      </Main>
    </Page>
  );
}
